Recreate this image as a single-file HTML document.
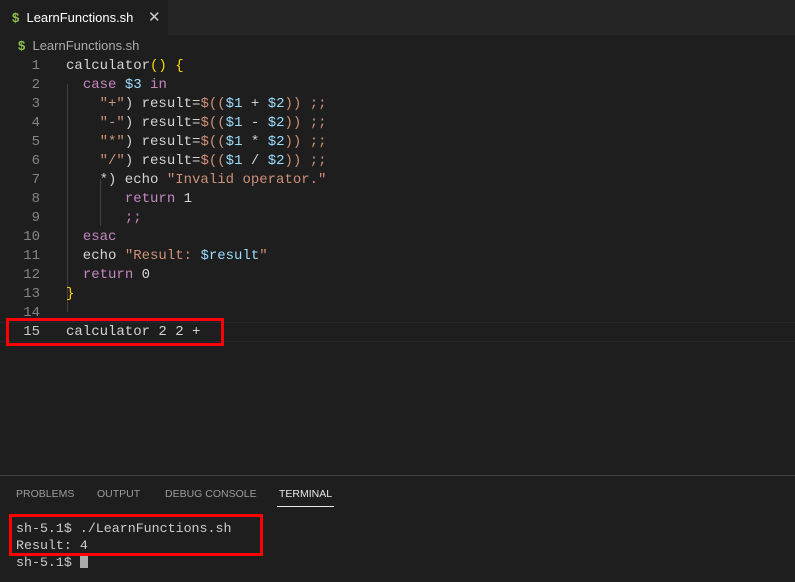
<!DOCTYPE html>
<html><head><style>
body{margin:0;width:795px;height:581px;background:#1e1e1e;overflow:hidden;position:relative;font-family:"Liberation Sans",sans-serif}
.tabs{position:absolute;left:0;top:0;width:795px;height:35px;background:#252526}
.tab{position:absolute;left:0;top:0;width:168px;height:35px;background:#1e1e1e;color:#fff;font-size:13px;line-height:35px}
.dol{color:#8dc149;font-weight:bold}
.bc{position:absolute;left:18px;top:37px;font-size:13px;color:#a9a9a9;line-height:17px}
.code{position:absolute;left:0;top:57px;font-family:"Liberation Mono",monospace;font-size:14px;line-height:19px;color:#d4d4d4;white-space:pre}
.ln{position:absolute;left:0;width:40px;text-align:right;color:#858585}
.tx{position:absolute;left:66px}
.k{color:#c586c0}.v{color:#9cdcfe}.s{color:#ce9178}.y{color:#ffd700}.n{color:#d4d4d4}
.guide{position:absolute;width:1px;background:#404040}
.cur{position:absolute;left:0;top:322px;width:795px;height:18px;border-top:1px solid #282828;border-bottom:1px solid #282828}
.red{position:absolute;border:3px solid #f00;box-sizing:border-box}
.panel{position:absolute;left:0;top:475px;width:795px;height:106px;border-top:1px solid #414141}
.ptab{position:absolute;top:12px;font-size:10.5px;color:#9d9d9d}
.term{position:absolute;left:16px;top:520px;font-family:"Liberation Mono",monospace;font-size:13.3px;line-height:17px;color:#ccc;white-space:pre}
</style></head><body>
<div class="tabs"><div class="tab"><span class="dol" style="margin-left:12px">$</span>&nbsp; LearnFunctions.sh<span style="position:absolute;left:148px;color:#ccc;font-size:15px">✕</span></div></div>
<div class="bc"><span class="dol">$</span>&nbsp; LearnFunctions.sh</div>
<div class="cur"></div>
<div class="guide" style="left:67px;top:84px;height:228px"></div>
<div class="guide" style="left:100px;top:179px;height:47px"></div>
<div class="code">
<div class="ln" style="top:0">1</div><div class="tx" style="top:0">calculator<span class="y">()</span> <span class="y">{</span></div>
<div class="ln" style="top:19px">2</div><div class="tx" style="top:19px">  <span class="k">case</span> <span class="v">$3</span> <span class="k">in</span></div>
<div class="ln" style="top:38px">3</div><div class="tx" style="top:38px">    <span class="s">"+"</span>) result=<span class="s">$((</span><span class="v">$1</span> + <span class="v">$2</span><span class="s">))</span> <span class="s">;;</span></div>
<div class="ln" style="top:57px">4</div><div class="tx" style="top:57px">    <span class="s">"-"</span>) result=<span class="s">$((</span><span class="v">$1</span> - <span class="v">$2</span><span class="s">))</span> <span class="s">;;</span></div>
<div class="ln" style="top:76px">5</div><div class="tx" style="top:76px">    <span class="s">"*"</span>) result=<span class="s">$((</span><span class="v">$1</span> * <span class="v">$2</span><span class="s">))</span> <span class="s">;;</span></div>
<div class="ln" style="top:95px">6</div><div class="tx" style="top:95px">    <span class="s">"/"</span>) result=<span class="s">$((</span><span class="v">$1</span> / <span class="v">$2</span><span class="s">))</span> <span class="s">;;</span></div>
<div class="ln" style="top:114px">7</div><div class="tx" style="top:114px">    *) echo <span class="s">"Invalid operator."</span></div>
<div class="ln" style="top:133px">8</div><div class="tx" style="top:133px">       <span class="k">return</span> <span class="n">1</span></div>
<div class="ln" style="top:152px">9</div><div class="tx" style="top:152px">       <span class="k">;;</span></div>
<div class="ln" style="top:171px">10</div><div class="tx" style="top:171px">  <span class="k">esac</span></div>
<div class="ln" style="top:190px">11</div><div class="tx" style="top:190px">  echo <span class="s">"Result: </span><span class="v">$result</span><span class="s">"</span></div>
<div class="ln" style="top:209px">12</div><div class="tx" style="top:209px">  <span class="k">return</span> <span class="n">0</span></div>
<div class="ln" style="top:228px">13</div><div class="tx" style="top:228px"><span class="y">}</span></div>
<div class="ln" style="top:247px">14</div>
<div class="ln" style="top:266px;color:#c6c6c6">15</div><div class="tx" style="top:266px">calculator 2 2 +</div>
</div>
<div class="red" style="left:6px;top:318px;width:218px;height:28px"></div>
<div class="panel">
<span class="ptab" style="left:16px">PROBLEMS</span>
<span class="ptab" style="left:97px">OUTPUT</span>
<span class="ptab" style="left:165px">DEBUG CONSOLE</span>
<span class="ptab" style="left:279px;color:#e7e7e7">TERMINAL</span>
<div style="position:absolute;left:277px;top:30px;width:57px;height:1px;background:#e7e7e7"></div>
</div>
<div class="term">sh-5.1$ ./LearnFunctions.sh
Result: 4
sh-5.1$ <span style="display:inline-block;width:8px;height:14px;background:#aaa;vertical-align:-2px"></span></div>
<div class="red" style="left:9px;top:514px;width:254px;height:42px"></div>
</body></html>
